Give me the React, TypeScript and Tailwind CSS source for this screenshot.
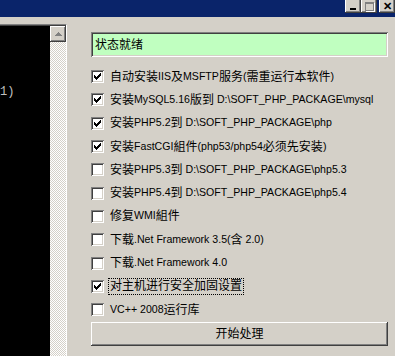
const CJK = /([\u3000-\u9fff\uff00-\uffef]+)/;

// CJK runs at 12px, latin runs at the narrower Tahoma-like size
function Txt({ text }: { text: string }) {
  const parts = text.split(CJK).filter((p) => p.length > 0);
  return (
    <>
      {parts.map((p, i) =>
        CJK.test(p) ? (
          <span key={i} className="text-[12px]">
            {p}
          </span>
        ) : (
          <span key={i} className="text-[10.6px] whitespace-pre">
            {p}
          </span>
        )
      )}
    </>
  );
}

const sunken =
  "shadow-[inset_1px_1px_#808080,inset_-1px_-1px_#ffffff,inset_2px_2px_#404040,inset_-2px_-2px_#d4d0c8]";
const raised =
  "shadow-[inset_-1px_-1px_#404040,inset_1px_1px_#ffffff,inset_-2px_-2px_#808080,inset_2px_2px_#d4d0c8]";

function Check() {
  // classic 7x7 bitmap check
  const rows = ["......X", ".....XX", "X...XXX", "XX.XXX.", "XXXXX..", ".XXX...", "..X...."];
  return (
    <svg width="7" height="7" viewBox="0 0 7 7" shapeRendering="crispEdges">
      {rows.flatMap((r, y) =>
        r.split("").map((c, x) => (c === "X" ? <rect key={`${x}-${y}`} x={x} y={y} width="1" height="1" fill="#000" /> : null))
      )}
    </svg>
  );
}

function Box({ checked }: { checked: boolean }) {
  return (
    <div className={`w-[13px] h-[13px] shrink-0 bg-white flex items-start justify-start p-[3px] ${sunken}`}>
      {checked && <Check />}
    </div>
  );
}

const items = [
  { label: "自动安装IIS及MSFTP服务(需重运行本软件)", checked: true },
  { label: "安装MySQL5.16版到 D:\\SOFT_PHP_PACKAGE\\mysql", checked: true },
  { label: "安装PHP5.2到 D:\\SOFT_PHP_PACKAGE\\php", checked: true },
  { label: "安装FastCGI組件(php53/php54必须先安装)", checked: true },
  { label: "安装PHP5.3到 D:\\SOFT_PHP_PACKAGE\\php5.3", checked: false },
  { label: "安装PHP5.4到 D:\\SOFT_PHP_PACKAGE\\php5.4", checked: false },
  { label: "修复WMI組件", checked: false },
  { label: "下载.Net Framework 3.5(含 2.0)", checked: false },
  { label: "下载.Net Framework 4.0", checked: false },
  { label: "对主机进行安全加固设置", checked: true, focus: true },
  { label: "VC++ 2008运行库", checked: false },
];

function TitleButton({ children }: { children: React.ReactNode }) {
  return <div className={`w-[16px] h-[14px] bg-[#d4d0c8] flex items-center justify-center ${raised}`}>{children}</div>;
}

export default function App() {
  return (
    <div
      className="w-[395px] h-[356px] bg-[#d4d0c8] overflow-hidden flex flex-col text-black"
      style={{ fontFamily: '"Liberation Sans", "Noto Sans CJK SC", sans-serif' }}
    >
      {/* title bar */}
      <div className="h-[17px] shrink-0 bg-[#0a246a] flex justify-end items-start gap-0">
        <div className="flex mt-[-1px]">
          <TitleButton>
            <div className="w-[6px] h-[2px] bg-black mt-[6px] mr-[1px]" />
          </TitleButton>
          <TitleButton>
            <div className="w-[9px] h-[9px] border border-[#808080] border-t-2 shadow-[1px_1px_#ffffff]" />
          </TitleButton>
          <div className="w-[2px]" />
          <TitleButton>
            <span className="text-[11px] font-bold leading-none">✕</span>
          </TitleButton>
        </div>
      </div>

      <div className="flex flex-1 min-h-0">
        {/* output edit with scrollbar */}
        <div className="mt-[7px] w-[67px] shrink-0 flex border-t border-[#808080] border-r border-r-white">
          <div className="flex flex-1 border-t border-[#404040]">
            <div className="w-[50px] bg-black overflow-hidden">
              <div className="mt-[60px] ml-0 text-[#c0c0c0] text-[12px] leading-none font-['Liberation_Mono',monospace]">1)</div>
            </div>
            <div className="w-[16px] flex flex-col">
              <div className={`h-[16px] bg-[#d4d0c8] flex items-center justify-center ${raised}`}>
                <svg width="7" height="4" viewBox="0 0 7 4" shapeRendering="crispEdges">
                  <polygon points="3.5,0 7,4 0,4" fill="#808080" />
                </svg>
              </div>
              <div className="flex-1 bg-[repeating-conic-gradient(#ffffff_0_25%,#d4d0c8_0_50%)] bg-[length:2px_2px]" />
            </div>
          </div>
        </div>

        {/* right column */}
        <div className="ml-[24px] w-[297px] pt-[15px] flex flex-col">
          <div className={`h-[25px] bg-[#c0ffc0] flex items-center pl-[4px] text-[12px] ${sunken}`}>状态就绪</div>

          <div className="mt-[8px] flex flex-col">
            {items.map((it) => (
              <div key={it.label} className="h-[23.3px] flex items-center">
                <Box checked={it.checked} />
                <span
                  className={`ml-[4px] px-[1px] h-[17px] flex items-center whitespace-nowrap border ${
                    it.focus ? "border-dotted border-black" : "border-transparent"
                  }`}
                >
                  <Txt text={it.label} />
                </span>
              </div>
            ))}
          </div>

          <div className={`mt-[1px] h-[24px] bg-[#d4d0c8] flex items-center justify-center text-[12px] ${raised}`}>开始处理</div>
        </div>
      </div>
    </div>
  );
}
